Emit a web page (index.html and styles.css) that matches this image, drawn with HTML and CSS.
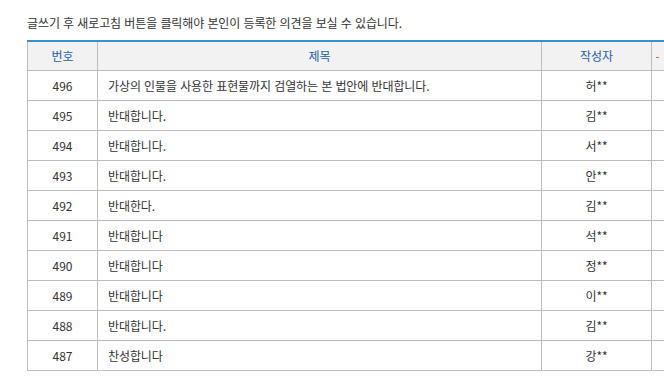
FILE: index.html
```html
<!DOCTYPE html>
<html lang="ko">
<head>
<meta charset="utf-8">
<link rel="stylesheet" href="styles.css">
</head>
<body>
<div class="page">
  <p class="notice">글쓰기 후 새로고침 버튼을 클릭해야 본인이 등록한 의견을 보실 수 있습니다.</p>
  <table class="board">
    <colgroup>
      <col class="c-num"><col class="c-title"><col class="c-author"><col class="c-extra">
    </colgroup>
    <thead>
      <tr><th>번호</th><th>제목</th><th>작성자</th><th class="extra"><span class="mark"></span></th></tr>
    </thead>
    <tbody>
      <tr><td class="num">496</td><td class="title">가상의 인물을 사용한 표현물까지 검열하는 본 법안에 반대합니다.</td><td class="author">허**</td><td></td></tr>
      <tr><td class="num">495</td><td class="title">반대합니다.</td><td class="author">김**</td><td></td></tr>
      <tr><td class="num">494</td><td class="title">반대합니다.</td><td class="author">서**</td><td></td></tr>
      <tr><td class="num">493</td><td class="title">반대합니다.</td><td class="author">안**</td><td></td></tr>
      <tr><td class="num">492</td><td class="title">반대한다.</td><td class="author">김**</td><td></td></tr>
      <tr><td class="num">491</td><td class="title">반대합니다</td><td class="author">석**</td><td></td></tr>
      <tr><td class="num">490</td><td class="title">반대합니다</td><td class="author">정**</td><td></td></tr>
      <tr><td class="num">489</td><td class="title">반대합니다</td><td class="author">이**</td><td></td></tr>
      <tr><td class="num">488</td><td class="title">반대합니다.</td><td class="author">김**</td><td></td></tr>
      <tr><td class="num">487</td><td class="title">찬성합니다</td><td class="author">강**</td><td></td></tr>
    </tbody>
  </table>
</div>
</body>
</html>
```

FILE: styles.css
```css
html, body {
  margin: 0;
  padding: 0;
  background: #fff;
  overflow: hidden;
}
body {
  font-family: "Noto Sans CJK KR", "Noto Sans", sans-serif;
  font-size: 12px;
  color: #333;
  width: 664px;
  height: 383px;
}
.page {
  padding: 15px 0 0 27px;
  width: 760px;
}
.notice {
  margin: 0;
  height: 25px;
  line-height: 16px;
  font-size: 12px;
  color: #333;
  letter-spacing: -0.1px;
}
.board {
  border-collapse: collapse;
  table-layout: fixed;
  width: 720px;
  border-top: 2px solid #3a8fd0;
}
.c-num { width: 70px; }
.c-title { width: 444px; }
.c-author { width: 110px; }
.c-extra { width: 96px; }
.board th, .board td {
  border: 1px solid #bcbcbc;
  height: 29px;
  padding: 0;
  vertical-align: middle;
  font-weight: normal;
  line-height: 16px;
}
.board th {
  background: #f2f2f2;
  color: #2060a8;
  text-align: center;
  height: 28px;
}
.board th.extra {
  text-align: left;
  padding-left: 4px;
}
.mark {
  display: block;
  width: 3px;
  height: 1px;
  background: #e06060;
  margin-top: 3px;
}
.board td.num, .board td.author { text-align: center; }
.board td.title {
  padding-left: 10px;
  letter-spacing: -0.1px;
}
```
